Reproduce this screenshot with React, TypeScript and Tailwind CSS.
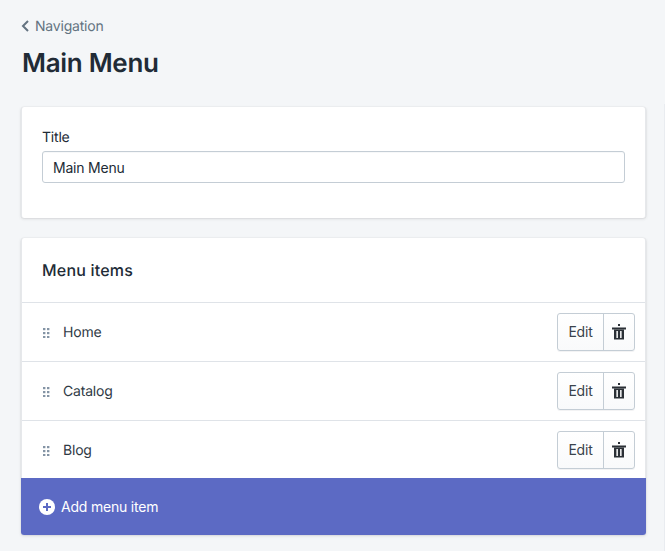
function Grip() {
  return (
    <svg width="8" height="10" viewBox="0 0 8 10" className="mt-[1px] shrink-0" fill="#8494a5">
      {[0, 4, 8].map((y) => (
        <g key={y}>
          <rect x="1" y={y} width="2.4" height="2.2" />
          <rect x="5" y={y} width="2.4" height="2.2" />
        </g>
      ))}
    </svg>
  );
}

function Trash() {
  return (
    <svg width="14" height="16" viewBox="0 0 14 16" fill="#2b3036">
      <rect x="6" y="0" width="2" height="2" />
      <rect x="0" y="3.5" width="14" height="2" />
      <path d="M2 5.5h10V15.5H2zM4.4 7v7h1.5V7zM8.1 7v7h1.5V7z" fillRule="evenodd" />
    </svg>
  );
}

function Row({ label }: { label: string }) {
  return (
    <div className="flex h-[59px] items-center border-t border-[#dfe3e8] pl-[20px] pr-[10px]">
      <Grip />
      <span className="ml-[13px] flex-1 text-[14px] text-[#2f3a45]">{label}</span>
      <div className="flex h-[38px] rounded-[3px] border border-[#c4cdd5] bg-gradient-to-b from-white to-[#f9fafb] shadow-[0_1px_0_rgba(22,29,37,0.05)]">
        <button className="w-[46px] border-r border-[#c4cdd5] pb-[2px] text-center text-[14px] text-[#3a434c]">Edit</button>
        <button className="flex w-[30px] items-center justify-center">
          <Trash />
        </button>
      </div>
    </div>
  );
}

export default function App() {
  return (
    <div className="relative h-[551px] w-[665px] overflow-hidden bg-[#f4f6f8] px-[21px] font-['Inter',sans-serif] tracking-[-0.2px] [text-rendering:geometricPrecision]">
      <div className="absolute right-0 top-[104px] h-[447px] w-px bg-[#e9ecf0]" />
      <div className="mt-[17px] flex h-[18px] items-center text-[14px] text-[#637381]">
        <svg width="8" height="12" viewBox="0 0 8 12" fill="none" stroke="#637381" strokeWidth="2" className="mr-[6px]">
          <path d="M7 1 2 6l5 5" />
        </svg>
        Navigation
      </div>
      <h1 className="mt-[14px] h-[30px] pl-[1px] text-[26px] leading-[30px] font-semibold tracking-[-0.3px] text-[#212b36]">Main Menu</h1>

      <section className="mt-[28px] h-[111px] w-[625px] rounded-[3px] border-x border-[#e6e8eb] bg-white px-[20px] pt-[23px] shadow-[0_0_0_0.5px_rgba(63,63,68,0.05),0_1px_3px_0_rgba(63,63,68,0.15)]">
        <label className="block h-[21px] text-[14px] leading-[16px] text-[#212b36]">Title</label>
        <input
          readOnly
          value="Main Menu"
          className="h-[32px] w-full rounded-[3px] border border-[#c4cdd5] bg-white px-[10px] text-[14px] text-[#212b36] shadow-[inset_0_1px_0_0_rgba(99,115,129,0.05)] outline-none"
        />
      </section>

      <section className="mt-[20px] h-[297px] w-[625px] rounded-[3px] border-x border-[#e6e8eb] bg-white shadow-[0_0_0_0.5px_rgba(63,63,68,0.05),0_1px_3px_0_rgba(63,63,68,0.15)]">
        <h2 className="flex h-[64px] items-center px-[20px] pb-[1px] text-[16px] font-medium tracking-[0.2px] text-[#212b36]">Menu items</h2>
        <Row label="Home" />
        <Row label="Catalog" />
        <div className="h-[58px]">
          <Row label="Blog" />
        </div>
        <button className="relative -mx-px flex h-[57px] w-[625px] items-center rounded-b-[3px] bg-[#5c6ac4] pl-[18px] text-[14px] text-white">
          <svg width="16" height="16" viewBox="0 0 16 16" className="mr-[6px]">
            <circle cx="8" cy="8" r="8" fill="#fff" />
            <path d="M8 4v8M4 8h8" stroke="#5c6ac4" strokeWidth="2" />
          </svg>
          Add menu item
        </button>
      </section>
    </div>
  );
}
